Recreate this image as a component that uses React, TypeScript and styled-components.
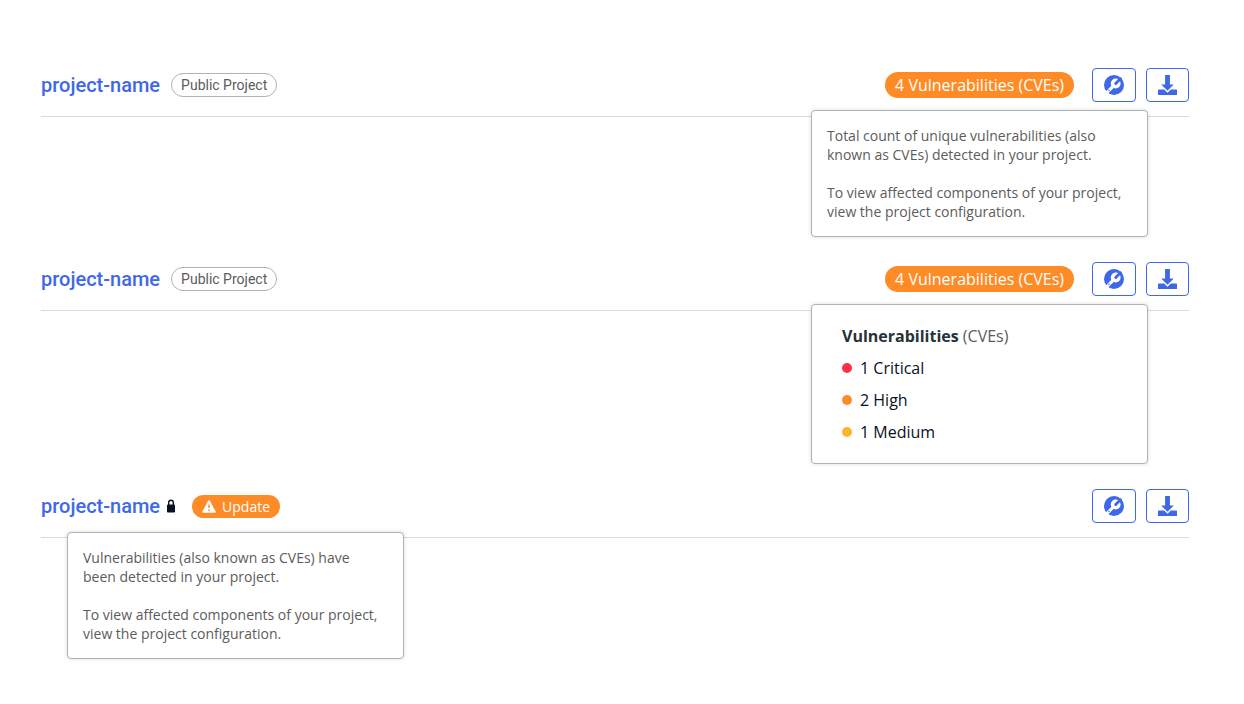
import React from "react";
import styled, { createGlobalStyle } from "styled-components";

const blue = "#3f68e8";
const orange = "#ff8b27";

const GlobalStyle = createGlobalStyle`
  *, *::before, *::after { box-sizing: border-box; }
  body {
    margin: 0;
    background: #fff;
    color: #09111f;
    font-family: "Open Sans", "Noto Sans", sans-serif;
    font-size: 16px;
  }
`;

const Page = styled.main`
  display: flex;
  flex-direction: column;
  gap: 25px;
  padding: 68px 55px 44px 41px;
`;

const Project = styled.section`
  display: flex;
  flex-direction: column;
`;

const Header = styled.header`
  display: flex;
  align-items: flex-start;
  justify-content: space-between;
  padding-bottom: 14px;
  border-bottom: 1px solid #d9dadb;
`;

const Group = styled.div<{ $gap: number }>`
  display: flex;
  align-items: center;
  gap: ${(p) => p.$gap}px;
  height: 34px;
`;

const ProjectName = styled.a`
  color: ${blue};
  font: 500 20px/24px Roboto, sans-serif;
  text-decoration: none;
`;

const VisibilityTag = styled.span`
  padding: 0 9px;
  border: 1px solid #a9b4bd;
  border-radius: 12px;
  color: #5c5c5c;
  font: 400 14px/22px Roboto, sans-serif;
`;

const CountBadge = styled.span`
  padding: 0 10px;
  border-radius: 13px;
  background: ${orange};
  color: #fff;
  font-size: 16px;
  line-height: 26px;
`;

const UpdateBadge = styled.span`
  display: flex;
  align-items: center;
  gap: 6px;
  margin-left: 10px;
  padding: 0 10px;
  border-radius: 12px;
  background: ${orange};
  color: #fff;
  font-size: 14px;
  line-height: 23px;
`;

const IconButton = styled.button`
  display: flex;
  align-items: center;
  justify-content: center;
  height: 34px;
  padding: 0 11px;
  border: 1px solid ${blue};
  border-radius: 4px;
  background: #fff;
  color: ${blue};
  cursor: pointer;
`;

const Popover = styled.div<{ $side: "left" | "right"; $inset: number }>`
  z-index: 1;
  align-self: ${(p) => (p.$side === "left" ? "flex-start" : "flex-end")};
  width: 337px;
  margin: ${(p) => (p.$side === "left" ? "-6px 0 0 26px" : "-7px 41px 0 0")};
  padding: 15px 20px 15px ${(p) => p.$inset}px;
  border: 1px solid #a9b4bd;
  border-radius: 4px;
  background: #fff;
  box-shadow: 0 0 4px rgba(0, 0, 0, 0.15);
`;

const Note = styled.p`
  margin: 0;
  color: #5c5c5c;
  font-size: 14px;
  line-height: 19px;

  & + & { margin-top: 19px; }
`;

const SummaryTitle = styled.h2`
  margin: 0;
  color: #263238;
  font-size: 16px;
  font-weight: 700;
  line-height: 32px;
`;

const Acronym = styled.span`
  color: #5c5c5c;
  font-weight: 400;
`;

const SeverityList = styled.ul`
  margin: 0;
  padding: 0;
  list-style: none;
`;

const Severity = styled.li<{ $color: string }>`
  display: flex;
  align-items: center;
  gap: 8px;
  line-height: 32px;

  &::before {
    content: "";
    width: 10px;
    height: 10px;
    border-radius: 50%;
    background: ${(p) => p.$color};
  }
`;

const RepairIcon = () => (
  <svg width="20" height="20" viewBox="0 0 20 20" aria-hidden="true">
    <circle cx="10" cy="10" r="10" fill="currentColor" />
    <path d="M2.800 17.600 9.500 10.900" stroke="#fff" strokeWidth="3" />
    <circle cx="11.700" cy="8.500" r="4.900" fill="#fff" />
    <path d="M11.700 8.500 16.500 3.700" stroke="currentColor" strokeWidth="2.900" strokeLinecap="round" />
    <circle cx="5" cy="15.300" r=".8" fill="currentColor" />
  </svg>
);

const DownloadIcon = () => (
  <svg width="19" height="20" viewBox="0 0 19 20" fill="currentColor" aria-hidden="true">
    <path d="M7.100 0h4.800v9.500h3.900L9.500 15.800 3.200 9.500h3.900z" />
    <path d="M.6 14.600h5.600l3.300 3.200 3.300-3.200h5.600q.6 0 .6.600v4.200q0 .6-.6.600H.6q-.6 0-.6-.6v-4.200q0-.6.6-.6z" />
  </svg>
);

const LockIcon = () => (
  <svg width="8" height="14" viewBox="0 0 8 14" role="img" aria-label="Private project">
    <path d="M1.700 6V3.500a2.300 2.300 0 0 1 4.600 0V6" fill="none" stroke="#09111f" strokeWidth="1.400" />
    <rect y="5.500" width="8" height="8" rx=".8" fill="#09111f" />
  </svg>
);

const WarningIcon = () => (
  <svg width="14" height="13" viewBox="0 0 14 13" aria-hidden="true">
    <path d="M7 1 13 12H1z" fill="#fff" stroke="#fff" strokeWidth="1.600" strokeLinejoin="round" />
    <path d="M7 4.500v3.500M7 9.300v1.600" stroke={orange} strokeWidth="1.500" />
  </svg>
);

const Actions = () => (
  <Group $gap={10}>
    <IconButton type="button" aria-label="Repair project"><RepairIcon /></IconButton>
    <IconButton type="button" aria-label="Download"><DownloadIcon /></IconButton>
  </Group>
);

const PublicHeader = () => (
  <Header>
    <Group $gap={11}>
      <ProjectName href="#project">project-name</ProjectName>
      <VisibilityTag>Public Project</VisibilityTag>
    </Group>
    <Group $gap={18}>
      <CountBadge>4 Vulnerabilities (CVEs)</CountBadge>
      <Actions />
    </Group>
  </Header>
);

export default function App() {
  return (
    <>
      <GlobalStyle />
      <Page>
        <Project>
          <PublicHeader />
          <Popover role="tooltip" $side="right" $inset={15}>
            <Note>Total count of unique vulnerabilities (also known as CVEs) detected in your project.</Note>
            <Note>To view affected components of your project, view the project configuration.</Note>
          </Popover>
        </Project>
        <Project>
          <PublicHeader />
          <Popover role="tooltip" $side="right" $inset={30}>
            <SummaryTitle>Vulnerabilities <Acronym>(CVEs)</Acronym></SummaryTitle>
            <SeverityList>
              <Severity $color="#fc2f4c">1 Critical</Severity>
              <Severity $color={orange}>2 High</Severity>
              <Severity $color="#ffb527">1 Medium</Severity>
            </SeverityList>
          </Popover>
        </Project>
        <Project>
          <Header>
            <Group $gap={7}>
              <ProjectName href="#project">project-name</ProjectName>
              <LockIcon />
              <UpdateBadge><WarningIcon />Update</UpdateBadge>
            </Group>
            <Actions />
          </Header>
          <Popover role="tooltip" $side="left" $inset={15}>
            <Note>Vulnerabilities (also known as CVEs) have been detected in your project.</Note>
            <Note>To view affected components of your project, view the project configuration.</Note>
          </Popover>
        </Project>
      </Page>
    </>
  );
}
